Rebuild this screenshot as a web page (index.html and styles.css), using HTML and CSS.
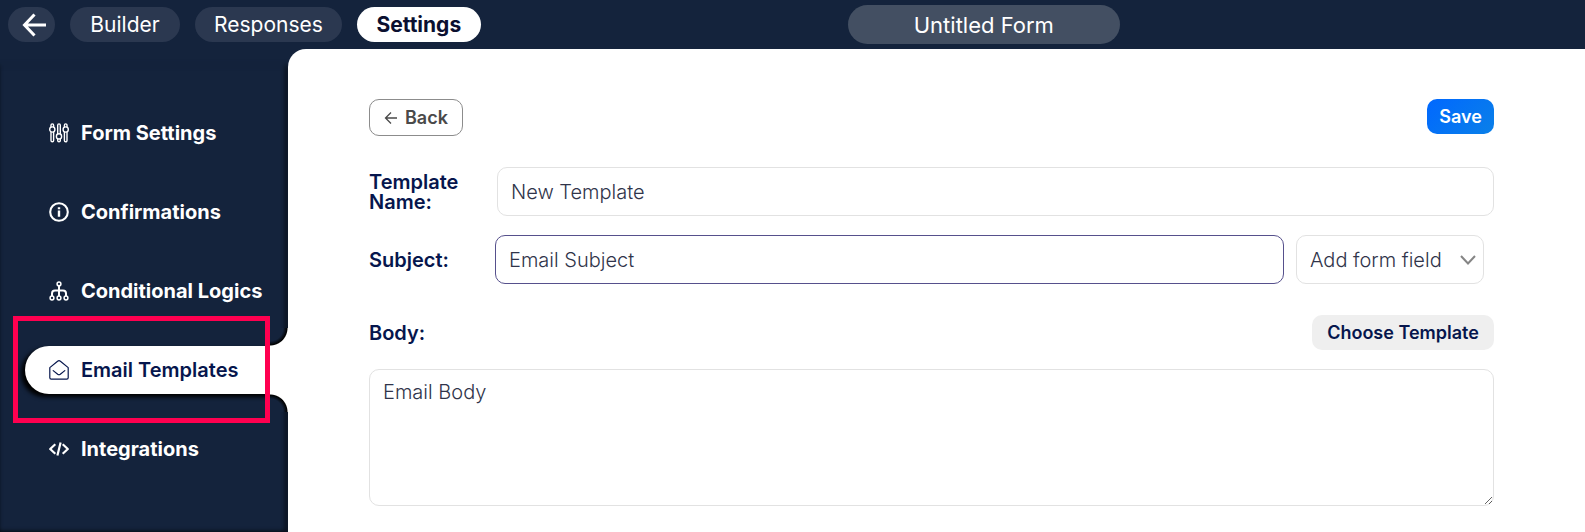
FILE: index.html
```html
<!DOCTYPE html>
<html lang="en">
<head>
<meta charset="utf-8">
<meta name="viewport" content="width=device-width, initial-scale=1">
<title>Email Templates</title>
<link rel="stylesheet" href="styles.css">
</head>
<body>
<header class="topbar">
  <nav class="tabs" aria-label="Form sections">
    <a class="tab tab-back" href="#" aria-label="Go back">
      <svg width="24" height="24" viewBox="0 0 24 24" fill="none" stroke="currentColor" stroke-width="3"><path d="M12.500 1.500 2.500 12l10 10.500M2.500 12H24"/></svg>
    </a>
    <a class="tab" href="#">Builder</a>
    <a class="tab" href="#">Responses</a>
    <a class="tab tab-active" href="#" aria-current="page">Settings</a>
  </nav>
  <input class="form-title" type="text" value="Untitled Form" aria-label="Form title">
</header>
<div class="layout">
  <aside class="sidebar">
    <nav class="menu" aria-label="Settings">
      <a class="menu-item" href="#">
        <svg class="icon" viewBox="0 0 20 20" fill="none" stroke="currentColor" stroke-width="1.400"><path d="M2 4.200V2.200a1.300 1.300 0 0 1 2.600 0v2M2 9v8.500a1.300 1.300 0 0 0 2.600 0V9M8.700 11V2.200a1.300 1.300 0 0 1 2.600 0V11M8.700 15.800v1.700a1.300 1.300 0 0 0 2.600 0v-1.700M15.400 4.200V2.200a1.300 1.300 0 0 1 2.600 0v2M15.400 9v8.500a1.300 1.300 0 0 0 2.600 0V9"/><circle cx="3.300" cy="6.500" r="2.600"/><circle cx="10" cy="13.400" r="2.600"/><circle cx="16.700" cy="6.500" r="2.600"/></svg>
        Form Settings
      </a>
      <a class="menu-item" href="#">
        <svg class="icon" viewBox="0 0 20 20" fill="none" stroke="currentColor" stroke-width="2.100"><circle cx="10" cy="10" r="8.800"/><path stroke-width="2.400" d="M10 8.600v6.100M10 5.200v2.100"/></svg>
        Confirmations
      </a>
      <a class="menu-item" href="#">
        <svg class="icon" viewBox="0 0 20 20" fill="none" stroke="currentColor" stroke-width="1.500"><circle cx="10" cy="2.900" r="1.900"/><circle cx="3" cy="17" r="1.900"/><circle cx="10" cy="17" r="1.900"/><circle cx="17" cy="17" r="1.900"/><path stroke-width="2" d="M10 5v10M3 15v-2.500Q3 9.400 6 9.400h8q3 0 3 3.100V15"/></svg>
        Conditional Logics
      </a>
      <a class="menu-item menu-item-active" href="#" aria-current="page">
        <svg class="icon" viewBox="0 0 20 20" fill="none" stroke="currentColor" stroke-width="1.200" stroke-linejoin="round" stroke-linecap="round"><path d="M.800 7.600 8.600 1.200q1.400-1 2.800 0l7.800 6.400v10.200q0 1.400-1.400 1.400H2.200q-1.400 0-1.400-1.400zM4.200 10.600l4.500 3.700q1.300.900 2.600 0l4.500-3.700"/></svg>
        Email Templates
      </a>
      <a class="menu-item" href="#">
        <svg class="icon" viewBox="0 0 20 20" fill="none" stroke="currentColor" stroke-width="2.200" stroke-linejoin="round"><path d="M6.300 5.200 1.200 10l5.100 4.800M13.700 5.200l5.100 4.800-5.100 4.800M11.600 3.400 8.400 16.600"/></svg>
        Integrations
      </a>
    </nav>
    <div class="highlight"></div>
  </aside>
  <main class="content">
    <div class="row">
      <button class="btn btn-outline" type="button">
        <svg width="14" height="14" viewBox="0 0 14 14" fill="none" stroke="currentColor" stroke-width="1.300"><path d="M7 1.500 1.500 7 7 12.500M1.500 7H13"/></svg>
        Back
      </button>
      <button class="btn btn-primary" type="submit">Save</button>
    </div>
    <div class="field">
      <label for="name">Template Name:</label>
      <input class="control" id="name" type="text" value="New Template">
    </div>
    <div class="field field-subject">
      <label for="subject">Subject:</label>
      <input class="control control-focus" id="subject" type="text" value="Email Subject">
      <div class="picker">
        <select class="control" aria-label="Add form field"><option>Add form field</option></select>
        <svg class="chevron" width="16" height="10" viewBox="0 0 16 10" fill="none" stroke="currentColor" stroke-width="2"><path d="m1 1 7 7.500L15 1"/></svg>
      </div>
    </div>
    <div class="row row-body">
      <label for="body">Body:</label>
      <button class="btn btn-muted" type="button">Choose Template</button>
    </div>
    <textarea class="control body-text" id="body">Email Body</textarea>
  </main>
</div>
</body>
</html>
```
FILE: styles.css
```css
:root {
  --navy: #14233c;
  --ink: #06164d;
  --line: #e2e2e2;
}

* {
  box-sizing: border-box;
}

body {
  margin: 0;
  min-height: 100vh;
  display: flex;
  flex-direction: column;
  background: var(--navy);
  font-family: Inter, "Liberation Sans", sans-serif;
  font-size: 20px;
  color: var(--ink);
}

input,
select,
textarea,
button {
  font: inherit;
}

.topbar {
  display: grid;
  grid-template-columns: auto auto;
  justify-content: start;
  column-gap: 367px;
  align-items: center;
  padding: 5px 8px;
}

.tabs {
  display: flex;
  gap: 15px;
}

.tab {
  display: flex;
  align-items: center;
  justify-content: center;
  min-width: 110px;
  height: 35px;
  padding: 0 19px;
  border-radius: 18px;
  background: #2b3850;
  color: #fff;
  font-size: 21px;
  text-decoration: none;
}

.tab-back {
  min-width: 47px;
  padding: 0 8px 0 13px;
}

.tab-active {
  min-width: 124px;
  background: #fff;
  color: #0b1030;
  font-weight: 700;
}

.form-title {
  width: 272px;
  height: 39px;
  padding: 0;
  border: 0;
  border-radius: 20px;
  background: #434f62;
  color: #fff;
  font-size: 22px;
  text-align: center;
}

.layout {
  flex: 1;
  display: flex;
}

.sidebar {
  position: relative;
  flex: 0 0 288px;
  padding: 60px 0 0 25px;
  box-shadow: inset -3px 18px 5px -2px var(--navy), inset -2px 0 5px #000;
}

.menu {
  display: flex;
  flex-direction: column;
  gap: 31px;
}

.menu-item {
  position: relative;
  display: flex;
  align-items: center;
  gap: 12px;
  height: 48px;
  padding-left: 24px;
  border-radius: 24px 0 0 24px;
  color: #fff;
  font-weight: 700;
  text-decoration: none;
  white-space: nowrap;
}

.icon {
  width: 20px;
  height: 20px;
}

.menu-item-active {
  background: #fff;
  color: var(--ink);
  font-weight: 600;
  box-shadow: -4px 3px 4px #000;
}

.menu-item-active::before,
.menu-item-active::after {
  content: "";
  position: absolute;
  right: 0;
  width: 18px;
  height: 18px;
}

.menu-item-active::before {
  bottom: 100%;
  background: radial-gradient(circle at 0 0, var(--navy) 13px, #000 17px, #fff 18px);
}

.menu-item-active::after {
  top: 100%;
  background: radial-gradient(circle at 0 100%, var(--navy) 13px, #000 17px, #fff 18px);
}

.highlight {
  position: absolute;
  top: 267px;
  left: 13px;
  width: 257px;
  height: 107px;
  border: 5px solid #ff0050;
  pointer-events: none;
}

.content {
  position: relative;
  flex: 1;
  min-width: 0;
  padding: 50px 91px 25px 81px;
  border-top-left-radius: 18px;
  background: #fff;
}

.row {
  display: flex;
  justify-content: space-between;
  align-items: flex-start;
}

.row-body {
  align-items: center;
  margin-top: 31px;
  margin-bottom: 19px;
}

.btn {
  display: flex;
  align-items: center;
  justify-content: center;
  gap: 7px;
  height: 35px;
  padding: 0 12px;
  border: 0;
  border-radius: 10px;
  font-size: 18px;
  font-weight: 600;
}

.btn-outline {
  height: 37px;
  padding: 0 14px;
  border: 1px solid #8c8c8c;
  background: #fff;
  color: #4a4a4a;
}

.btn-primary {
  min-width: 67px;
  background: linear-gradient(135deg, #0068ff, #0a80e8);
  color: #fff;
}

.btn-muted {
  min-width: 182px;
  background: #efefef;
  color: var(--ink);
}

label {
  font-weight: 600;
  line-height: 20px;
}

.field {
  display: grid;
  grid-template-columns: 116px 1fr;
  column-gap: 12px;
  align-items: center;
  margin-top: 31px;
}

.field-subject {
  grid-template-columns: 114px 1fr 188px;
  margin-top: 19px;
  margin-right: 10px;
}

.control {
  width: 100%;
  height: 49px;
  padding: 0 13px;
  border: 1px solid var(--line);
  border-radius: 10px;
  outline: 0;
  background: #fff;
  color: #30344a;
  font-weight: 300;
}

.control-focus {
  border-color: #56508c;
}

.picker {
  position: relative;
}

.picker .control {
  display: block;
  appearance: none;
}

.chevron {
  position: absolute;
  top: 20px;
  right: 8px;
  color: #858585;
  pointer-events: none;
}

.body-text {
  display: block;
  height: 137px;
  padding: 10px 13px;
  resize: vertical;
}
```
